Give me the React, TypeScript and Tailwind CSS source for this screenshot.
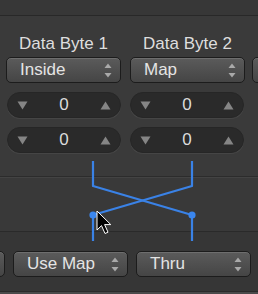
import React from 'react';

const font = { fontFamily: '"Liberation Sans", Arial, sans-serif' };

const PopupArrows: React.FC = () => (
  <svg width="8" height="15" viewBox="0 0 8 15" className="shrink-0">
    <path d="M4 0.5 L7.5 5 L0.5 5 Z" fill="#a9a9a9" />
    <path d="M4 14.5 L7.5 10 L0.5 10 Z" fill="#a9a9a9" />
  </svg>
);

interface PopupProps {
  label?: string;
  className?: string;
}

const Popup: React.FC<PopupProps> = ({ label = '', className = '' }) => (
  <div
    className={`h-[26px] w-[115px] shrink-0 rounded-[5px] border border-[#1c1c1c] bg-gradient-to-b from-[#5b5b5b] to-[#454545] shadow-[inset_0_1px_0_rgba(255,255,255,0.12)] flex items-center justify-between pl-[13px] pr-[8px] ${className}`}
  >
    <span className="text-[17px] leading-[20px] text-[#e4e4e4]">{label}</span>
    <PopupArrows />
  </div>
);

const Stepper: React.FC<{ value: number }> = ({ value }) => (
  <div className="h-[26px] w-[114px] rounded-full bg-[#2a2a2a] border border-[#262626] shadow-[0_1px_0_rgba(255,255,255,0.06)] flex items-center justify-between px-[9px]">
    <svg width="11" height="9" viewBox="0 0 11 9">
      <path d="M0.5 0.5 L10.5 0.5 L5.5 8.5 Z" fill="#858585" />
    </svg>
    <span className="text-[17px] leading-[20px] text-[#dcdcdc]">{value}</span>
    <svg width="11" height="9" viewBox="0 0 11 9">
      <path d="M0.5 8.5 L10.5 8.5 L5.5 0.5 Z" fill="#858585" />
    </svg>
  </div>
);

const Wiring: React.FC = () => (
  <svg width="258" height="98" viewBox="0 0 258 98" className="absolute left-0 top-0">
    <g stroke="#3a82e6" strokeWidth="2.2" fill="none" strokeLinejoin="round">
      <path d="M93 8 L93 33 L192 62 L192 88" />
      <path d="M192 8 L192 33 L93 62 L93 88" />
    </g>
    <circle cx="93" cy="62" r="3.6" fill="#3a86ee" />
    <circle cx="192" cy="62" r="3.6" fill="#3a86ee" />
    <path
      d="M97 58 L97 77 L101.5 72.6 L105 80.5 L108 79.2 L104.6 71.6 L110.8 71.6 Z"
      fill="#000"
      stroke="#fff"
      strokeWidth="1"
      strokeLinejoin="round"
    />
  </svg>
);

const App: React.FC = () => {
  return (
    <div className="w-[258px] h-[294px] overflow-hidden bg-[#3a3a3a] flex flex-col" style={font}>
      <div className="h-[16px] shrink-0 bg-[#373737] border-b border-[#282828]" />
      <div className="mt-[18px] flex gap-[9px] pl-[6px]">
        <div className="w-[115px] shrink-0 flex flex-col">
          <div className="text-center text-[17px] leading-[20px] text-[#dedede]">Data Byte 1</div>
          <Popup label="Inside" className="mt-[3px]" />
        </div>
        <div className="w-[115px] shrink-0 flex flex-col">
          <div className="text-center text-[17px] leading-[20px] text-[#dedede]">Data Byte 2</div>
          <Popup label="Map" className="mt-[3px]" />
        </div>
        <div className="w-[115px] shrink-0 flex flex-col">
          <div className="h-[20px]" />
          <Popup className="mt-[3px] -ml-[2px]" />
        </div>
      </div>
      <div className="mt-[9px] flex flex-col gap-[9px] pl-[7px]">
        <div className="flex gap-[9px]">
          <Stepper value={0} />
          <Stepper value={0} />
        </div>
        <div className="flex gap-[9px]">
          <Stepper value={0} />
          <Stepper value={0} />
        </div>
      </div>
      <div className="relative h-[98px] shrink-0 flex flex-col">
        <div className="h-[23px] shrink-0" />
        <div className="h-[55px] shrink-0 border-t border-[#2c2c2c] bg-[#393939] shadow-[inset_0_1px_0_rgba(255,255,255,0.05)]" />
        <div className="flex-1 border-t border-[#2a2a2a] bg-[#363636]" />
        <Wiring />
      </div>
      <div className="flex-1 bg-[#363636] flex flex-col">
        <div className="flex gap-[8px] -ml-[110px]">
          <Popup />
          <Popup label="Use Map" />
          <Popup label="Thru" />
        </div>
        <div className="mt-auto h-[3px] bg-[#4a4a4a] border-t border-[#2a2a2a]" />
      </div>
    </div>
  );
};

export default App;
